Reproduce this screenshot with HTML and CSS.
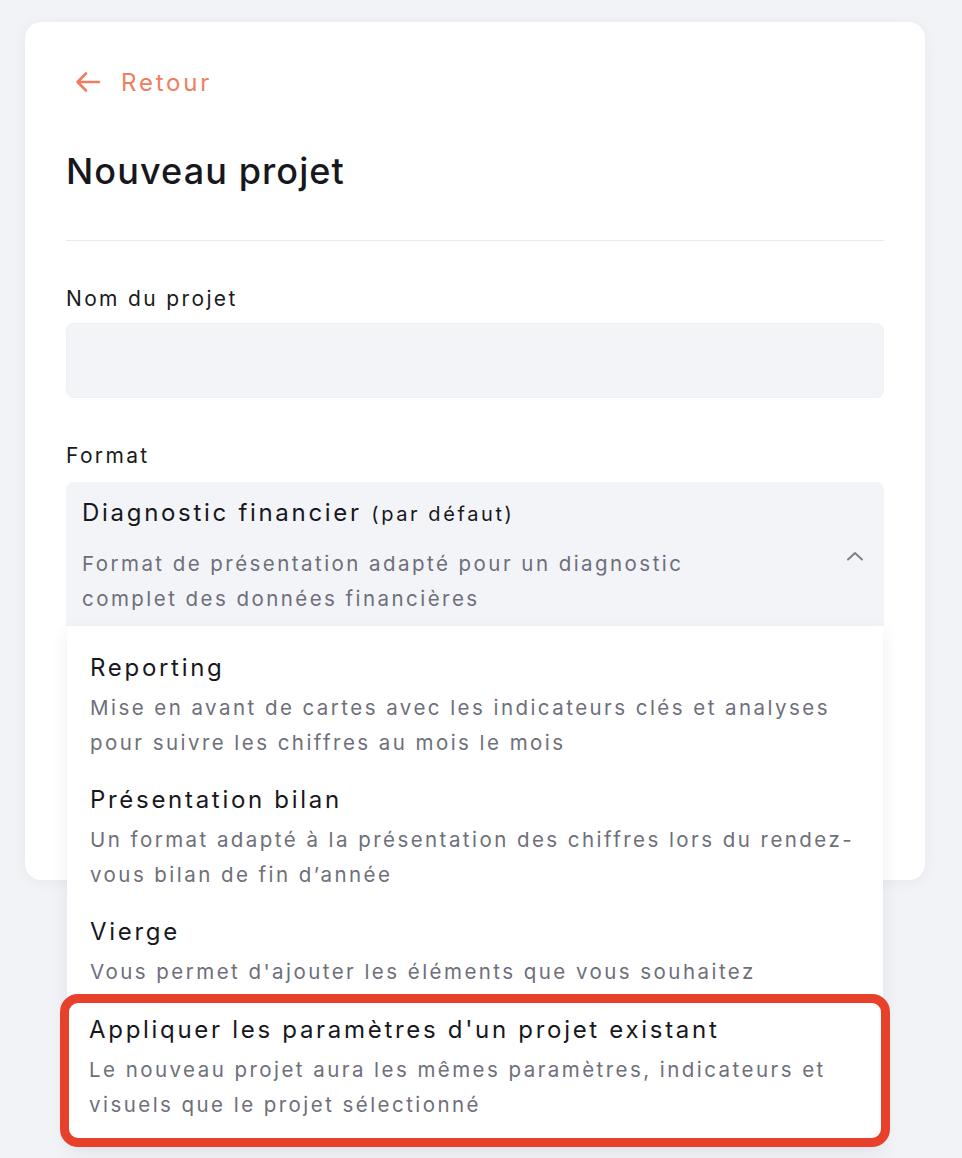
FILE: index.html
```html
<!DOCTYPE html>
<html lang="fr">
<head>
<meta charset="utf-8">
<title>Nouveau projet</title>
<link rel="stylesheet" href="styles.css">
</head>
<body>
<div class="page">
  <div class="card">
    <a class="back" href="#">
      <svg class="back-icon" width="26" height="22" viewBox="0 0 26 22" fill="none" stroke="currentColor" stroke-width="2.6" stroke-linecap="round" stroke-linejoin="round"><path d="M24 11H3M11 2.5L2.5 11L11 19.5"/></svg>
      <span>Retour</span>
    </a>
    <h1 class="title">Nouveau projet</h1>
    <hr class="divider">
    <label class="label">Nom du projet</label>
    <div class="input"></div>
    <label class="label label-format">Format</label>
    <div class="select-wrap">
      <div class="select">
        <div class="select-text">
          <div class="opt-title">Diagnostic financier <span class="opt-note">(par défaut)</span></div>
          <div class="opt-desc">Format de présentation adapté pour un diagnostic<br>complet des données financières</div>
        </div>
        <svg class="chevron" width="18" height="10" viewBox="0 0 18 10" fill="none" stroke="currentColor" stroke-width="2" stroke-linecap="round" stroke-linejoin="round"><path d="M2 8.5L9 2L16 8.5"/></svg>
      </div>
      <ul class="menu">
        <li class="item">
          <div class="opt-title">Reporting</div>
          <div class="opt-desc">Mise en avant de cartes avec les indicateurs clés et analyses<br>pour suivre les chiffres au mois le mois</div>
        </li>
        <li class="item">
          <div class="opt-title">Présentation bilan</div>
          <div class="opt-desc">Un format adapté à la présentation des chiffres lors du rendez-<br>vous bilan de fin d’année</div>
        </li>
        <li class="item">
          <div class="opt-title">Vierge</div>
          <div class="opt-desc">Vous permet d'ajouter les éléments que vous souhaitez</div>
        </li>
        <li class="item item-highlight">
          <div class="opt-title">Appliquer les paramètres d'un projet existant</div>
          <div class="opt-desc">Le nouveau projet aura les mêmes paramètres, indicateurs et<br>visuels que le projet sélectionné</div>
        </li>
      </ul>
    </div>
  </div>
</div>
</body>
</html>
```

FILE: styles.css
```css
* { box-sizing: border-box; }
html, body { margin: 0; padding: 0; }
body {
  background: #f2f3f7;
  font-family: Inter, "Open Sans", sans-serif;
  color: #17181d;
  width: 962px;
  height: 1158px;
  overflow: hidden;
}
.page {
  padding: 22px 37px 0 25px;
}
.card {
  background: #ffffff;
  border-radius: 16px;
  box-shadow: 0 2px 14px rgba(30, 35, 60, 0.05);
  height: 858px;
  padding: 40px 41px 0 41px;
  display: flex;
  flex-direction: column;
}
.back {
  display: flex;
  align-items: center;
  gap: 20px;
  height: 40px;
  padding-left: 9px;
  color: #ef7e61;
  text-decoration: none;
  font-size: 24px;
  letter-spacing: 2.8px;
}
.back-icon { display: block; }
.title {
  margin: 45px 0 0 0;
  font-size: 36px;
  line-height: 48px;
  font-weight: 500;
  letter-spacing: 1.1px;
}
.divider {
  margin: 45px 0 0 0;
  border: 0;
  border-top: 1px solid #e9eaee;
  height: 0;
}
.label {
  display: block;
  margin-top: 43px;
  font-size: 21px;
  line-height: 30px;
  letter-spacing: 2.35px;
  color: #1a1b20;
}
.label-format { margin-top: 43px; }
.input {
  margin-top: 9px;
  height: 75px;
  background: #f3f4f8;
  border: 1px solid #eef0f4;
  border-radius: 8px;
}
.select-wrap {
  position: relative;
  margin-top: 11px;
}
.select {
  height: 144px;
  background: #f3f4f8;
  border-radius: 8px 8px 0 0;
  padding: 13px 20px 0 16px;
  display: flex;
  justify-content: space-between;
  align-items: flex-start;
}
.chevron {
  color: #7f808a;
  margin-top: 56px;
  display: block;
}
.opt-title {
  font-size: 24px;
  line-height: 36px;
  letter-spacing: 2.7px;
  color: #17181d;
}
.opt-note {
  font-size: 20px;
  letter-spacing: 2.6px;
}
.opt-desc {
  font-size: 20.5px;
  line-height: 35px;
  letter-spacing: 2.45px;
  color: #6e6f7a;
}
.select .opt-desc { margin-top: 14px; }
.menu {
  position: absolute;
  left: 1px;
  right: 1px;
  top: 144px;
  margin: 0;
  padding: 13px 0 0 0;
  list-style: none;
  background: #ffffff;
  box-shadow: 0 6px 18px rgba(30, 35, 60, 0.08);
  border-radius: 0 0 8px 8px;
}
.item {
  padding: 11px 23px 11px 23px;
}
.item .opt-title { line-height: 36px; }
.item .opt-desc { margin-top: 4px; }
.item-highlight {
  margin: -6px -7px 0 -7px;
  border: 9px solid #e8412b;
  border-radius: 18px;
  padding: 9px 20px 16px 20px;
  background: #ffffff;
}
```
